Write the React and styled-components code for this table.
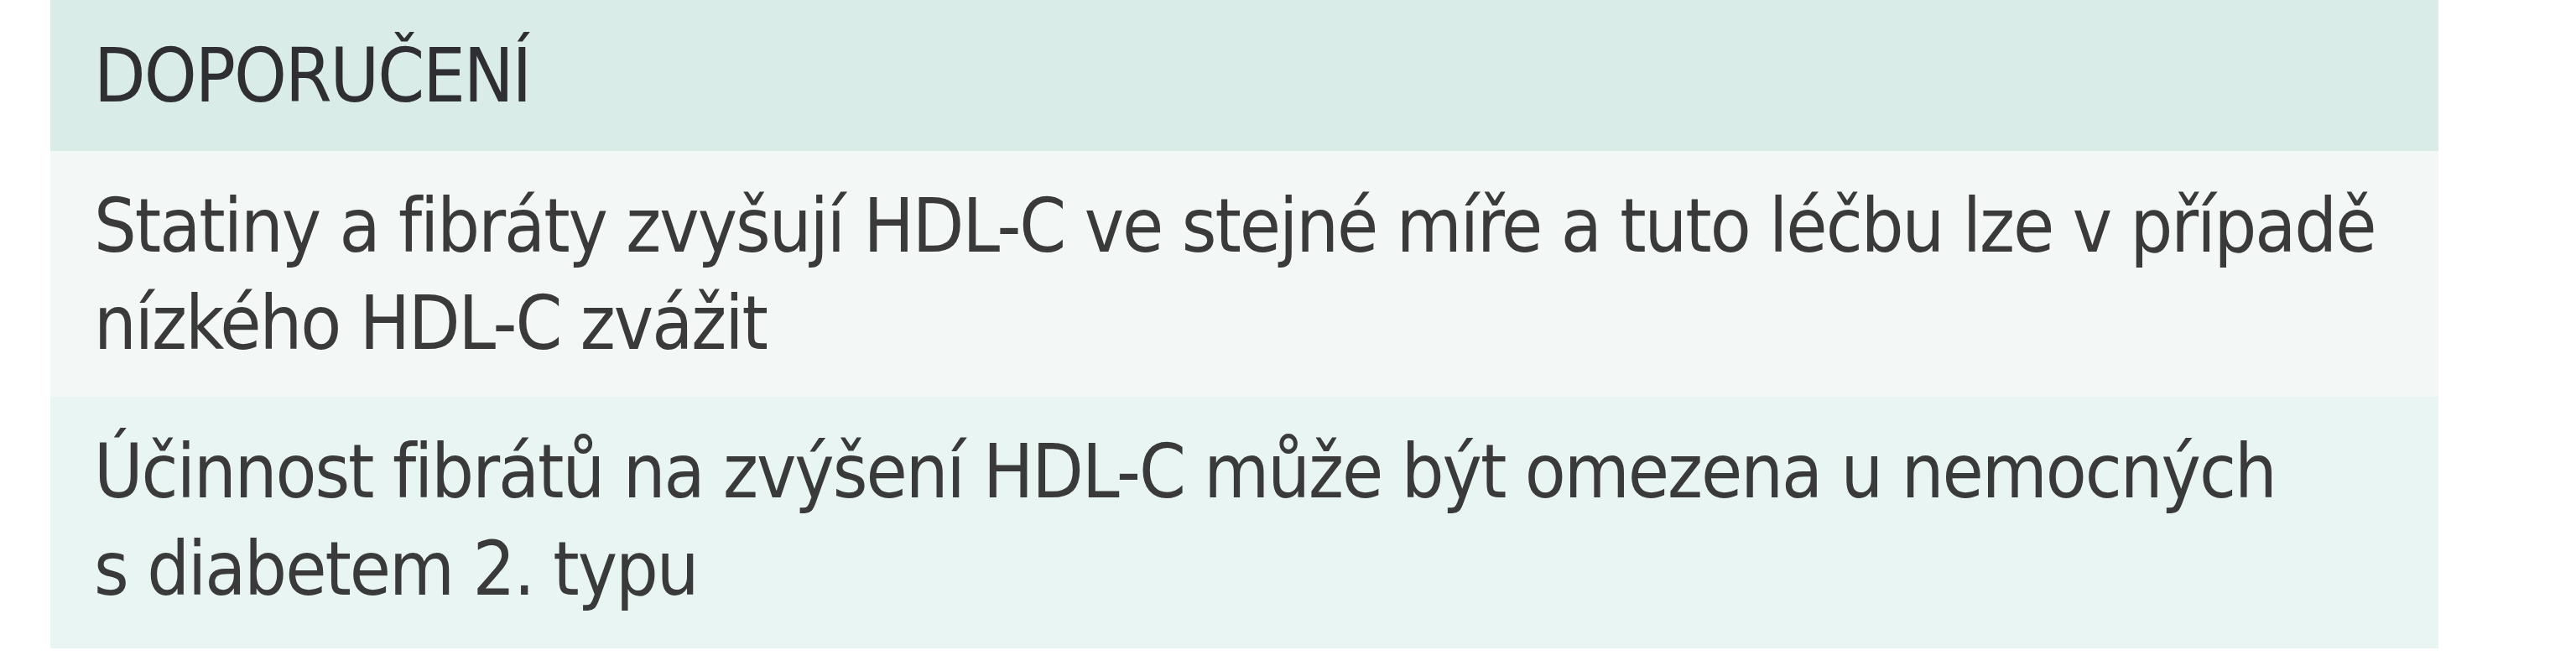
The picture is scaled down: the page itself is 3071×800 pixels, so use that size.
import React from 'react';
import styled, { createGlobalStyle } from 'styled-components';

const GlobalStyle = createGlobalStyle`
  html, body {
    margin: 0;
    padding: 0;
    background: #ffffff;
  }
`;

const Page = styled.div`
  padding-left: 60px;
  width: 3071px;
  box-sizing: border-box;
`;

const Table = styled.div`
  width: 2847px;
  display: flex;
  flex-direction: column;
  font-family: "DejaVu Sans Condensed", "Liberation Sans", sans-serif;
  font-size: 89px;
  letter-spacing: -2px;
  color: #3a3a3a;
`;

const HeaderCell = styled.div`
  height: 180px;
  box-sizing: border-box;
  display: flex;
  align-items: center;
  padding: 0 52px;
  background: #d9ece8;
  color: #2f2f33;
  line-height: 1;
`;

const Row = styled.div`
  box-sizing: border-box;
  padding: ${props => props.pad};
  background: ${props => props.bg};
  line-height: 116px;
`;

const rows = [
  {
    text: 'Statiny a fibráty zvyšují HDL-C ve stejné míře a tuto léčbu lze v\u00a0případě nízkého HDL-C zvážit',
    bg: '#f3f8f7',
    pad: '31px 52px 30px',
  },
  {
    text: 'Účinnost fibrátů na zvýšení HDL-C může být omezena u nemocných s\u00a0diabetem 2. typu',
    bg: '#e8f5f3',
    pad: '31px 52px 37px',
  },
];

export default function App() {
  return (
    <>
      <GlobalStyle />
      <Page>
        <Table>
          <HeaderCell>DOPORUČENÍ</HeaderCell>
          {rows.map((row, i) => (
            <Row key={i} bg={row.bg} pad={row.pad}>
              {row.text}
            </Row>
          ))}
        </Table>
      </Page>
    </>
  );
}
